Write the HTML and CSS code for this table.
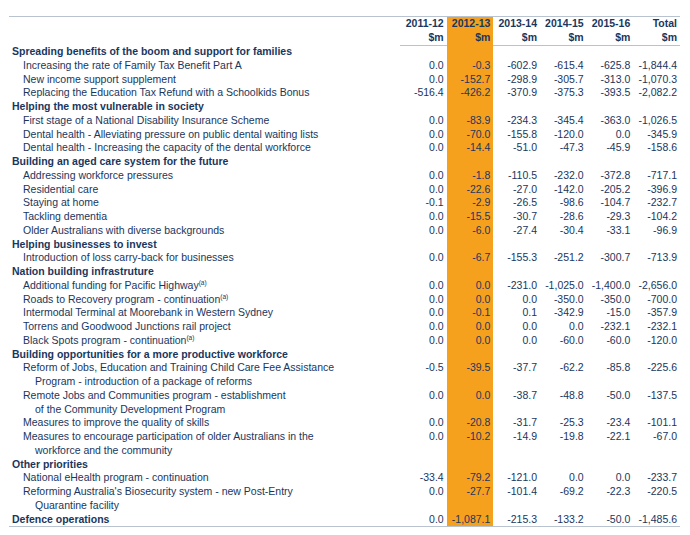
FILE: index.html
```html
<!DOCTYPE html>
<html lang="en">
<head>
    <meta charset="UTF-8">
    <title>Budget measures</title>
    <link rel="stylesheet" href="styles.css">
</head>
<body>
    <table class="measures">
        <colgroup>
            <col class="c-label">
            <col class="c-num"><col class="c-num"><col class="c-num">
            <col class="c-num"><col class="c-num"><col class="c-num">
        </colgroup>
        <thead>
            <tr>
                <th class="label"></th>
                <th>2011-12<br>$m</th>
                <th class="cur">2012-13<br>$m</th>
                <th>2013-14<br>$m</th>
                <th>2014-15<br>$m</th>
                <th>2015-16<br>$m</th>
                <th>Total<br>$m</th>
            </tr>
        </thead>
        <tbody>
            <tr class="group"><td class="label">Spreading benefits of the boom and support for families</td><td></td><td class="cur"></td><td></td><td></td><td></td><td></td></tr>
            <tr><td class="label">Increasing the rate of Family Tax Benefit Part A</td><td>0.0</td><td class="cur">-0.3</td><td>-602.9</td><td>-615.4</td><td>-625.8</td><td>-1,844.4</td></tr>
            <tr><td class="label">New income support supplement</td><td>0.0</td><td class="cur">-152.7</td><td>-298.9</td><td>-305.7</td><td>-313.0</td><td>-1,070.3</td></tr>
            <tr><td class="label">Replacing the Education Tax Refund with a Schoolkids Bonus</td><td>-516.4</td><td class="cur">-426.2</td><td>-370.9</td><td>-375.3</td><td>-393.5</td><td>-2,082.2</td></tr>

            <tr class="group"><td class="label">Helping the most vulnerable in society</td><td></td><td class="cur"></td><td></td><td></td><td></td><td></td></tr>
            <tr><td class="label">First stage of a National Disability Insurance Scheme</td><td>0.0</td><td class="cur">-83.9</td><td>-234.3</td><td>-345.4</td><td>-363.0</td><td>-1,026.5</td></tr>
            <tr><td class="label">Dental health - Alleviating pressure on public dental waiting lists</td><td>0.0</td><td class="cur">-70.0</td><td>-155.8</td><td>-120.0</td><td>0.0</td><td>-345.9</td></tr>
            <tr><td class="label">Dental health - Increasing the capacity of the dental workforce</td><td>0.0</td><td class="cur">-14.4</td><td>-51.0</td><td>-47.3</td><td>-45.9</td><td>-158.6</td></tr>

            <tr class="group"><td class="label">Building an aged care system for the future</td><td></td><td class="cur"></td><td></td><td></td><td></td><td></td></tr>
            <tr><td class="label">Addressing workforce pressures</td><td>0.0</td><td class="cur">-1.8</td><td>-110.5</td><td>-232.0</td><td>-372.8</td><td>-717.1</td></tr>
            <tr><td class="label">Residential care</td><td>0.0</td><td class="cur">-22.6</td><td>-27.0</td><td>-142.0</td><td>-205.2</td><td>-396.9</td></tr>
            <tr><td class="label">Staying at home</td><td>-0.1</td><td class="cur">-2.9</td><td>-26.5</td><td>-98.6</td><td>-104.7</td><td>-232.7</td></tr>
            <tr><td class="label">Tackling dementia</td><td>0.0</td><td class="cur">-15.5</td><td>-30.7</td><td>-28.6</td><td>-29.3</td><td>-104.2</td></tr>
            <tr><td class="label">Older Australians with diverse backgrounds</td><td>0.0</td><td class="cur">-6.0</td><td>-27.4</td><td>-30.4</td><td>-33.1</td><td>-96.9</td></tr>

            <tr class="group"><td class="label">Helping businesses to invest</td><td></td><td class="cur"></td><td></td><td></td><td></td><td></td></tr>
            <tr><td class="label">Introduction of loss carry-back for businesses</td><td>0.0</td><td class="cur">-6.7</td><td>-155.3</td><td>-251.2</td><td>-300.7</td><td>-713.9</td></tr>

            <tr class="group"><td class="label">Nation building infrastruture</td><td></td><td class="cur"></td><td></td><td></td><td></td><td></td></tr>
            <tr><td class="label">Additional funding for Pacific Highway<sup>(a)</sup></td><td>0.0</td><td class="cur">0.0</td><td>-231.0</td><td>-1,025.0</td><td>-1,400.0</td><td>-2,656.0</td></tr>
            <tr><td class="label">Roads to Recovery program - continuation<sup>(a)</sup></td><td>0.0</td><td class="cur">0.0</td><td>0.0</td><td>-350.0</td><td>-350.0</td><td>-700.0</td></tr>
            <tr><td class="label">Intermodal Terminal at Moorebank in Western Sydney</td><td>0.0</td><td class="cur">-0.1</td><td>0.1</td><td>-342.9</td><td>-15.0</td><td>-357.9</td></tr>
            <tr><td class="label">Torrens and Goodwood Junctions rail project</td><td>0.0</td><td class="cur">0.0</td><td>0.0</td><td>0.0</td><td>-232.1</td><td>-232.1</td></tr>
            <tr><td class="label">Black Spots program - continuation<sup>(a)</sup></td><td>0.0</td><td class="cur">0.0</td><td>0.0</td><td>-60.0</td><td>-60.0</td><td>-120.0</td></tr>

            <tr class="group"><td class="label">Building opportunities for a more productive workforce</td><td></td><td class="cur"></td><td></td><td></td><td></td><td></td></tr>
            <tr><td class="label">Reform of Jobs, Education and Training Child Care Fee Assistance<br>Program - introduction of a package of reforms</td><td>-0.5</td><td class="cur">-39.5</td><td>-37.7</td><td>-62.2</td><td>-85.8</td><td>-225.6</td></tr>
            <tr><td class="label">Remote Jobs and Communities program - establishment<br>of the Community Development Program</td><td>0.0</td><td class="cur">0.0</td><td>-38.7</td><td>-48.8</td><td>-50.0</td><td>-137.5</td></tr>
            <tr><td class="label">Measures to improve the quality of skills</td><td>0.0</td><td class="cur">-20.8</td><td>-31.7</td><td>-25.3</td><td>-23.4</td><td>-101.1</td></tr>
            <tr><td class="label">Measures to encourage participation of older Australians in the<br>workforce and the community</td><td>0.0</td><td class="cur">-10.2</td><td>-14.9</td><td>-19.8</td><td>-22.1</td><td>-67.0</td></tr>

            <tr class="group"><td class="label">Other priorities</td><td></td><td class="cur"></td><td></td><td></td><td></td><td></td></tr>
            <tr><td class="label">National eHealth program - continuation</td><td>-33.4</td><td class="cur">-79.2</td><td>-121.0</td><td>0.0</td><td>0.0</td><td>-233.7</td></tr>
            <tr><td class="label">Reforming Australia's Biosecurity system - new Post-Entry<br>Quarantine facility</td><td>0.0</td><td class="cur">-27.7</td><td>-101.4</td><td>-69.2</td><td>-22.3</td><td>-220.5</td></tr>

            <tr class="group"><td class="label">Defence operations</td><td>0.0</td><td class="cur">-1,087.1</td><td>-215.3</td><td>-133.2</td><td>-50.0</td><td>-1,485.6</td></tr>
        </tbody>
    </table>
</body>
</html>
```

FILE: styles.css
```css
body {
    margin: 0;
    padding: 16px 0 0 9px;
    font-family: "Liberation Sans", Arial, sans-serif;
    font-size: 10.5px;
    color: #1a365d;
    background: #fff;
}

/* Tabla de medidas */
.measures {
    width: 671px;
    table-layout: fixed;
    border-collapse: collapse;
    border-top: 1px solid #b9c3cf;
    border-bottom: 1px solid #b9c3cf;
    line-height: 13.75px;
}

.c-label {
    width: 391px;
}

.c-num {
    width: 46.67px;
}

th,
td {
    padding: 0 3px 0 0;
    text-align: right;
    vertical-align: top;
    white-space: nowrap;
}

th {
    font-weight: bold;
    border-bottom: 1px solid #b9c3cf;
}

th.label {
    border-bottom: none;
}

td.label,
th.label {
    text-align: left;
    padding: 0 0 0 26px;
    text-indent: -12px;
}

.group td.label {
    font-weight: bold;
    padding-left: 3px;
    text-indent: 0;
}

.cur {
    background: #f6a11e;
}

th.cur {
    border-bottom-color: #f6a11e;
}

sup {
    font-size: 6.5px;
    line-height: 0;
    vertical-align: 4px;
}
```
